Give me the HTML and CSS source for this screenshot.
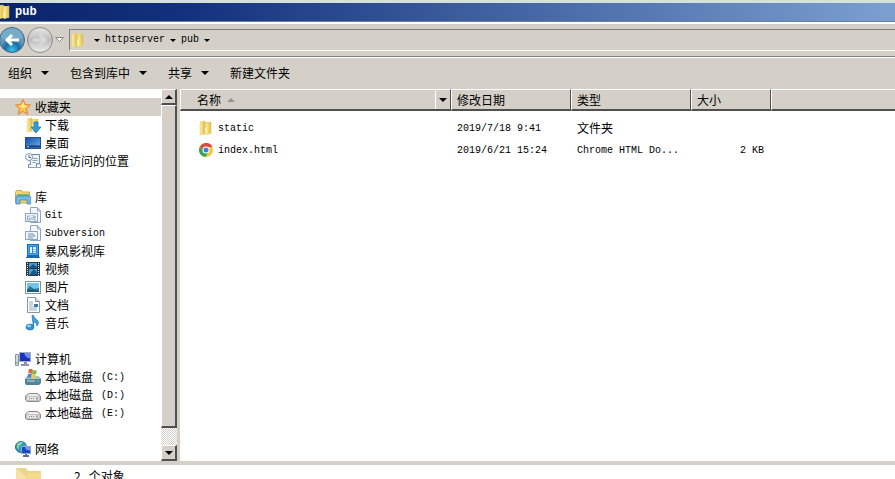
FILE: index.html
```html
<!DOCTYPE html>
<html lang="zh-CN">
<head>
    <meta charset="UTF-8">
    <meta name="viewport" content="width=device-width, initial-scale=1.0">
    <title>pub</title>
    <link rel="stylesheet" href="styles.css">
</head>
<body>

    <svg class="defs" aria-hidden="true">
        <linearGradient id="gold" x1="0" x2="1"><stop offset="0" stop-color="#fff3a6"/><stop offset="1" stop-color="#dfb83f"/></linearGradient>
        <linearGradient id="blue" x1="0" x2="1" y2="1"><stop offset="0" stop-color="#174fa5"/><stop offset="1" stop-color="#64b5ee"/></linearGradient>
        <radialGradient id="ball" cy=".9"><stop offset="0" stop-color="#39c5e8"/><stop offset=".6" stop-color="#176da5"/><stop offset="1" stop-color="#6599bc"/></radialGradient>
        <linearGradient id="glass" y2="1" x2="0"><stop offset="0" stop-color="#e8e8e8"/><stop offset=".5" stop-color="#bdbdbd"/><stop offset="1" stop-color="#ededed"/></linearGradient>
        <symbol id="folder" viewBox="0 0 16 16">
            <path d="M2 2l5-1 1 1h5v12H2z" fill="#efd98a"/>
            <path d="M2 2l5-1v13l-5 1z" fill="url(#gold)" stroke="#e2cf85" stroke-width=".5"/>
            <path d="M8 3l5-1v11l-5 2z" fill="url(#gold)" stroke="#dcc46b" stroke-width=".5"/>
            <path d="M7 8l2-1v6l-2 1z" fill="#fff0ae"/>
        </symbol>
        <symbol id="drive" viewBox="0 0 16 16">
            <path d="M.5 9l3-2.500h9l3 2.500v4l-1.500 1.500H2L.5 13z" fill="#c4c4c4" stroke="#8a8a8a"/>
            <path d="M1.500 9l2.500-2h8l2.500 2z" fill="#ededed"/>
            <rect x="2" y="10" width="12" height="3" rx="1" fill="#e6e6e6"/>
            <path d="M4 11.500h1m1 0h1m1 0h1" stroke="#888"/>
            <path d="M12 10.500v2" stroke="#555"/>
        </symbol>
        <symbol id="repo" viewBox="0 0 16 16">
            <path d="M5.500 1v-.5h7l3 3v12h-10z" fill="#f5f9fd" stroke="#8fa7be"/>
            <path d="M12.500 1v3h3" fill="#dce8f3" stroke="#8fa7be"/>
            <rect x=".5" y="6.500" width="12" height="8" fill="#edf4fa" stroke="#8fa7be"/>
        </symbol>
    </svg>

    <header class="title-bar">
        <svg class="icon"><use href="#folder"/></svg>
        <h1>pub</h1>
    </header>

    <nav class="nav-bar">
        <button class="round" type="button" aria-label="后退">
            <svg viewBox="0 0 26 26"><circle cx="13" cy="13" r="12.500" fill="url(#ball)" stroke="#426681"/><path d="M2 11a11 10 0 0 1 22 0q-11 5-22 0z" fill="#8fc0dc" opacity=".45"/><path d="M20 13H8m5-5l-5 5 5 5" fill="none" stroke="#fff" stroke-width="3"/></svg>
        </button>
        <button class="round" type="button" aria-label="前进">
            <svg viewBox="0 0 26 26"><circle cx="13" cy="13" r="12.500" fill="url(#glass)" stroke="#8b8b8b"/><path d="M6 13h12m-5-5l5 5-5 5" fill="none" stroke="#d8d8d8" stroke-width="3"/></svg>
        </button>
        <button class="history" type="button" aria-label="最近的页面">
            <svg viewBox="0 0 9 6"><path d="M.5 .5h8l-4 4z" fill="#fff" stroke="#888"/></svg>
        </button>
        <div class="address">
            <svg class="icon"><use href="#folder"/></svg>
            <i class="arrow small"></i>
            <a class="en" href="#httpserver">httpserver</a>
            <i class="arrow small"></i>
            <a class="en" href="#pub">pub</a>
            <i class="arrow small"></i>
        </div>
    </nav>

    <div class="toolbar">
        <button type="button">组织 <i class="arrow"></i></button>
        <button type="button">包含到库中 <i class="arrow"></i></button>
        <button type="button">共享 <i class="arrow"></i></button>
        <button type="button">新建文件夹</button>
    </div>

    <main class="explorer">
        <aside class="sidebar">
            <div class="tree">
                <ul>
                    <li class="group selected"><a href="#favorites">
                        <svg class="icon" viewBox="0 0 16 16"><path d="M8 .5l2.200 5 5.300.5-4 3.700 1.200 5.600L8 12.500l-4.700 2.800 1.200-5.600-4-3.700 5.300-.5z" fill="#ffc247" stroke="#e5822b"/><path d="M8 2.500l1.500 4 3.500.5-5 2-4-2 2.500-.5z" fill="#ffe69a"/></svg>收藏夹</a></li>
                    <li><a href="#downloads">
                        <svg class="icon" viewBox="0 0 16 16"><use href="#folder" width="16" height="16"/><path d="M9 5h4v5h3l-5 6-5-6h3z" fill="#329bd8" stroke="#1c74b5" stroke-width=".7"/></svg>下载</a></li>
                    <li><a href="#desktop">
                        <svg class="icon" viewBox="0 0 16 16"><rect x=".5" y="2.500" width="15" height="11" fill="url(#blue)" stroke="#254f91"/><path d="M1 11.500h14" stroke="#173d79" stroke-width="2"/><path d="M2 11.500h2" stroke="#7fdbff"/></svg>桌面</a></li>
                    <li><a href="#recent">
                        <svg class="icon" viewBox="0 0 16 16"><path d="M4.500 1.500h10v9h-3v4h-8v-3h2z" fill="#edf3f8" stroke="#6b8ba8"/><path d="M11.500 11h4v3.500h-11m3-9h5m-5 2h5m-5 2h3" fill="none" stroke="#8aa4bc"/><circle cx="4" cy="4" r="3.500" fill="#f5faff" stroke="#8499ad"/><path d="M4 2v2.500h2" fill="none" stroke="#426b99"/></svg>最近访问的位置</a></li>
                </ul>
                <ul>
                    <li class="group"><a href="#libraries">
                        <svg class="icon" viewBox="0 0 16 16"><path d="M.5 3.500l1-2h5l1 1.500h7v11H.5z" fill="#f4d66f" stroke="#cda947"/><path d="M2 5h12v2H2z" fill="#71bb75"/><path d="M1 8q0-1 1-1h12q2 0 2 2v6h-4v-4H5v4H1z" fill="#75b9e5" stroke="#3b83b9" stroke-width=".7"/></svg>库</a></li>
                    <li><a href="#git">
                        <svg class="icon" viewBox="0 0 16 16"><use href="#repo" width="16" height="16"/><path d="M5 9H2.500v4H5v-2H4m3-1v3m0-5v1m2-1v5h2m-3-3h3" fill="none" stroke="#7893b1" stroke-width=".8"/></svg><span class="en">Git</span></a></li>
                    <li><a href="#subversion">
                        <svg class="icon" viewBox="0 0 16 16"><use href="#repo" width="16" height="16"/><path d="M3 9h5l2 2m-7 0h7m-7 2h5" fill="none" stroke="#7893b1"/></svg><span class="en">Subversion</span></a></li>
                    <li><a href="#storm">
                        <svg class="icon" viewBox="0 0 16 16"><path d="M2 1h12v12l1 2H1l1-2z" fill="#1766ae"/><rect x="3.500" y="2.500" width="9" height="9" fill="#2489dc" stroke="#4ba6ee"/><path d="M5 4h2v6H5zm3 0h3v2H8zm0 2.500h3v1.500H8zm0 2h3V10H8z" fill="#e2f3ff"/></svg>暴风影视库</a></li>
                    <li><a href="#videos">
                        <svg class="icon" viewBox="0 0 16 16"><path d="M1 1h14v14H1z" fill="#263746"/><path d="M4 2h8v5H4zm0 6h8v6H4z" fill="#4a9dcc"/><path d="M5 13l4-5 3 4v2H5zM4 7l4-4 4 3v1z" fill="#17578a"/><path d="M2.500 2v13m11-13v13" stroke="#dce8f0" stroke-dasharray="1 1"/></svg>视频</a></li>
                    <li><a href="#pictures">
                        <svg class="icon" viewBox="0 0 16 16"><rect x=".5" y="2.500" width="15" height="12" fill="#fff" stroke="#7b95aa"/><path d="M2 4h12v9H2z" fill="#72c5e9"/><path d="M2 10l3-3 4 3 5-1v4H2z" fill="#317b91"/><path d="M2 11q6-2 12 1v1H2z" fill="#195a82"/></svg>图片</a></li>
                    <li><a href="#documents">
                        <svg class="icon" viewBox="0 0 16 16"><path d="M2.500.5h8l4 4v11h-12z" fill="#fff" stroke="#8497a8"/><path d="M10.500.5v4h4" fill="#dbe6f0" stroke="#8497a8"/><path d="M4 5h4m-4 2h4m-4 2h4m-4 2h8m-8 2h8" stroke="#94abc1"/><path d="M9 7h4v3H9z" fill="#357ba8"/></svg>文档</a></li>
                    <li><a href="#music">
                        <svg class="icon" viewBox="0 0 16 16"><path d="M7 .5h1.500q.5 2.500 3 4 3.500 2.500.5 6.500 0-3.500-3.500-4.500V12z" fill="#3ba2e3" stroke="#1976bd" stroke-width=".7"/><ellipse cx="5" cy="12" rx="4" ry="3" fill="#2c93da" stroke="#1976bd" stroke-width=".7"/><ellipse cx="4" cy="11" rx="2" ry="1.200" fill="#9ad8fa"/></svg>音乐</a></li>
                </ul>
                <ul>
                    <li class="group"><a href="#computer">
                        <svg class="icon" viewBox="0 0 16 16"><path d="M.5 3.500h3v11h-3z" fill="#d1dce2" stroke="#8798a3"/><path d="M1 12h2" stroke="#45bd5a"/><rect x="4.500" y="1.500" width="11" height="9" fill="#1834bd" stroke="#a9acb9"/><path d="M9 2h6v5q-4 1-6-5z" fill="#6f8bea"/><path d="M9 11h3v2h2v2H6v-2h3z" fill="#8994a7"/></svg>计算机</a></li>
                    <li><a href="#c">
                        <svg class="icon" viewBox="0 0 16 16"><path d="M0 10l3-3h10l3 3v4l-2 2H1l-1-2z" fill="#51849a"/><path d="M0 10l3-3h10l3 3z" fill="#a6c5cb"/><path d="M2 12h8" stroke="#c8dce0"/><path d="M12 12h2" stroke="#65e05a"/><path d="M4 0q2-1 4 1L7 5q-2-2-4-1z" fill="#e5633d"/><path d="M8 1q2 1 4 0l-1 4q-2 1-4 0z" fill="#79b74b"/><path d="M3 5q2-1 4 0L6 9q-2-1-4 0z" fill="#438bd1"/><path d="M7 5q2 1 4 0l-1 4q-2 1-4 0z" fill="#f2c744"/></svg>本地磁盘<span class="en disk">(C:)</span></a></li>
                    <li><a href="#d"><svg class="icon"><use href="#drive"/></svg>本地磁盘<span class="en disk">(D:)</span></a></li>
                    <li><a href="#e"><svg class="icon"><use href="#drive"/></svg>本地磁盘<span class="en disk">(E:)</span></a></li>
                </ul>
                <ul>
                    <li class="group"><a href="#network">
                        <svg class="icon" viewBox="0 0 16 16"><circle cx="6" cy="6" r="5.500" fill="#2b9ac0" stroke="#276b99"/><path d="M2 3q3-3 6-2L6 4 4 5v3L2 7zm5 3l4-2v4l-3 2z" fill="#8ad59a"/><rect x="6.500" y="5.500" width="9" height="7" fill="#1d46c4" stroke="#8da4cc"/><path d="M10 6h5v3q-4 1-5-3z" fill="#7599eb"/><path d="M10 13h2v1h2v2H8v-2h2z" fill="#53729f"/></svg>网络</a></li>
                </ul>
            </div>
            <div class="scrollbar">
                <button type="button" aria-label="向上滚动"><i class="arrow up"></i></button>
                <div class="thumb"></div>
                <div class="track"></div>
                <button type="button" aria-label="向下滚动"><i class="arrow"></i></button>
            </div>
        </aside>

        <section class="files">
            <table>
                <colgroup>
                    <col class="col-name"><col class="col-date"><col class="col-type"><col class="col-size"><col>
                </colgroup>
                <thead>
                    <tr>
                        <th><div class="name-head">名称 <i class="arrow sort"></i><button type="button" aria-label="筛选名称"><i class="arrow"></i></button></div></th>
                        <th>修改日期</th>
                        <th>类型</th>
                        <th>大小</th>
                        <td></td>
                    </tr>
                </thead>
                <tbody>
                    <tr>
                        <td><a href="#static"><svg class="icon"><use href="#folder"/></svg><span class="en">static</span></a></td>
                        <td class="en">2019/7/18 9:41</td>
                        <td>文件夹</td>
                        <td></td>
                        <td></td>
                    </tr>
                    <tr>
                        <td><a href="#index"><svg class="icon" viewBox="0 0 16 16"><circle cx="8" cy="8" r="7" fill="#f5c63c"/><path d="M2 4.500A7 7 0 0 1 14.500 5H8a3 3 0 0 0-2.700 4.500z" fill="#db4b3f"/><path d="M2 4.500A7 7 0 0 0 7.500 15l3-5.300a3 3 0 0 1-5.200 0z" fill="#35a35b"/><circle cx="8" cy="8" r="3.500" fill="#fff"/><circle cx="8" cy="8" r="2.500" fill="#3b7ee0"/></svg><span class="en">index.html</span></a></td>
                        <td class="en">2019/6/21 15:24</td>
                        <td class="en">Chrome HTML Do...</td>
                        <td class="en size">2 KB</td>
                        <td></td>
                    </tr>
                </tbody>
            </table>
        </section>
    </main>

    <footer class="status">
        <svg viewBox="0 0 28 28"><path d="M1 1h10l2 3h13v24H1z" fill="#ecd58a"/><path d="M1 1l10 8v19H1z" fill="#f6e3a3"/><path d="M12 6h14v22H12z" fill="#f3dc90"/></svg>
        <p><span>2</span>个对象</p>
    </footer>

</body>
</html>
```
FILE: styles.css
```css
* {
    box-sizing: border-box;
}

body {
    margin: 0;
    height: 100vh;
    display: flex;
    flex-direction: column;
    overflow: hidden;
    background: #fff;
    color: #000;
    font: 12px/18px "Noto Sans CJK SC", sans-serif;
}

a {
    color: inherit;
    text-decoration: none;
}

button {
    padding: 0;
    border: 0;
    background: none;
    color: inherit;
    font: inherit;
}

ul, p, h1 {
    margin: 0;
    padding: 0;
    list-style: none;
}

.defs {
    position: absolute;
    width: 0;
    height: 0;
}

.en {
    padding-top: 2px;
    font-family: "Liberation Mono", monospace;
    font-size: 10px;
}

.icon {
    width: 16px;
    height: 16px;
    flex: none;
}

.arrow {
    flex: none;
    border: 4px solid transparent;
    border-top-color: #000;
    border-bottom: 0;
}

.arrow.small {
    border-width: 3px 3px 0;
}

.arrow.up {
    border-top: 0;
    border-bottom: 4px solid #000;
}

.arrow.sort {
    border-top: 0;
    border-bottom: 4px solid #969690;
}

.title-bar {
    flex: none;
    height: 22px;
    display: flex;
    align-items: center;
    border-top: 3px solid #d5e2d9;
    border-bottom: 1px solid #6680a0;
    background: linear-gradient(90deg, #0a246a, #12307c 20%, #7ba0d0);
    color: #fff;
}

.title-bar .icon {
    margin-left: -4px;
}

h1 {
    margin-left: 3px;
    font: bold 12px/18px "Liberation Mono", monospace;
}

.nav-bar {
    flex: none;
    height: 35px;
    display: flex;
    align-items: center;
    border-top: 2px solid #fff;
    border-bottom: 1px solid #808080;
    background: #d4d0c8;
}

.round {
    width: 26px;
    height: 26px;
    margin-right: 2px;
}

.round:first-child {
    margin-left: -1px;
}

.round svg, .history svg {
    display: block;
}

.history {
    width: 9px;
    margin-right: 5px;
}

.address {
    flex: 1;
    height: 22px;
    display: flex;
    align-items: center;
    gap: 5px;
    border: 1px solid #857b70;
    border-right: 0;
    border-bottom-color: #fff;
}

.address .icon {
    margin-right: 3px;
}

.address .en {
    padding-top: 0;
}

.toolbar {
    flex: none;
    height: 32px;
    display: flex;
    align-items: center;
    gap: 21px;
    padding: 0 0 2px 8px;
    border-top: 1px solid #fff;
    background: #d4d0c8;
}

.toolbar button {
    display: flex;
    align-items: center;
    gap: 9px;
}

.explorer {
    flex: 1;
    min-height: 0;
    display: flex;
}

.sidebar {
    flex: none;
    width: 180px;
    display: flex;
    border-right: 3px solid #d4d0c8;
}

.tree {
    flex: 1;
    padding-top: 9px;
}

.tree ul {
    margin-bottom: 18px;
}

.tree li {
    height: 18px;
    padding-left: 25px;
}

.tree .group {
    padding-left: 15px;
}

.tree .selected {
    background: #d4d0c8;
}

.tree a, .files td a {
    height: 18px;
    display: flex;
    align-items: center;
    gap: 4px;
}

.disk {
    margin-left: 4px;
}

.scrollbar {
    width: 16px;
    display: flex;
    flex-direction: column;
}

.scrollbar button, .thumb {
    border: 1px solid #fff;
    border-right: 2px solid #505050;
    border-bottom: 2px solid #505050;
    background: #d4d0c8;
}

.scrollbar button {
    height: 16px;
    display: flex;
    align-items: center;
    justify-content: center;
}

.thumb {
    flex: 1;
}

.track {
    height: 17px;
    background: repeating-conic-gradient(#d4d0c8 0 25%, #fff 0 50%) 0 0 / 2px 2px;
}

.files {
    flex: 1;
    min-width: 0;
}

table {
    width: 100%;
    table-layout: fixed;
    border-collapse: separate;
    border-spacing: 0;
}

.col-name {
    width: 271px;
}

.col-date, .col-type {
    width: 120px;
}

.col-size {
    width: 80px;
}

thead th, thead td {
    height: 22px;
    padding: 0 0 0 5px;
    border-top: 1px solid #fff;
    border-left: 1px solid #fff;
    border-right: 1px solid #505050;
    border-bottom: 2px solid #505050;
    background: #d4d0c8;
    font-weight: normal;
    text-align: left;
}

thead td {
    border-right: 0;
}

thead th:first-child {
    padding-left: 16px;
}

.name-head {
    display: flex;
    align-items: center;
    gap: 6px;
}

.name-head button {
    height: 19px;
    width: 15px;
    margin-left: auto;
    display: flex;
    align-items: center;
    justify-content: center;
    border-left: 1px solid #fff;
}

tbody::before {
    content: "";
    display: block;
    height: 6px;
}

tbody td {
    height: 22px;
    padding: 0 0 0 6px;
    white-space: nowrap;
}

tbody td.en {
    padding-top: 2px;
}

tbody td:first-child {
    padding-left: 18px;
}

tbody .size {
    padding-right: 7px;
    text-align: right;
}

.status {
    flex: none;
    height: 18px;
    display: flex;
    align-items: flex-start;
    gap: 31px;
    padding: 2px 0 0 15px;
    border-top: 4px solid #d4d0c8;
    overflow: hidden;
}

.status svg {
    width: 28px;
    height: 28px;
    flex: none;
}

.status p {
    display: flex;
    gap: 8px;
}
```
